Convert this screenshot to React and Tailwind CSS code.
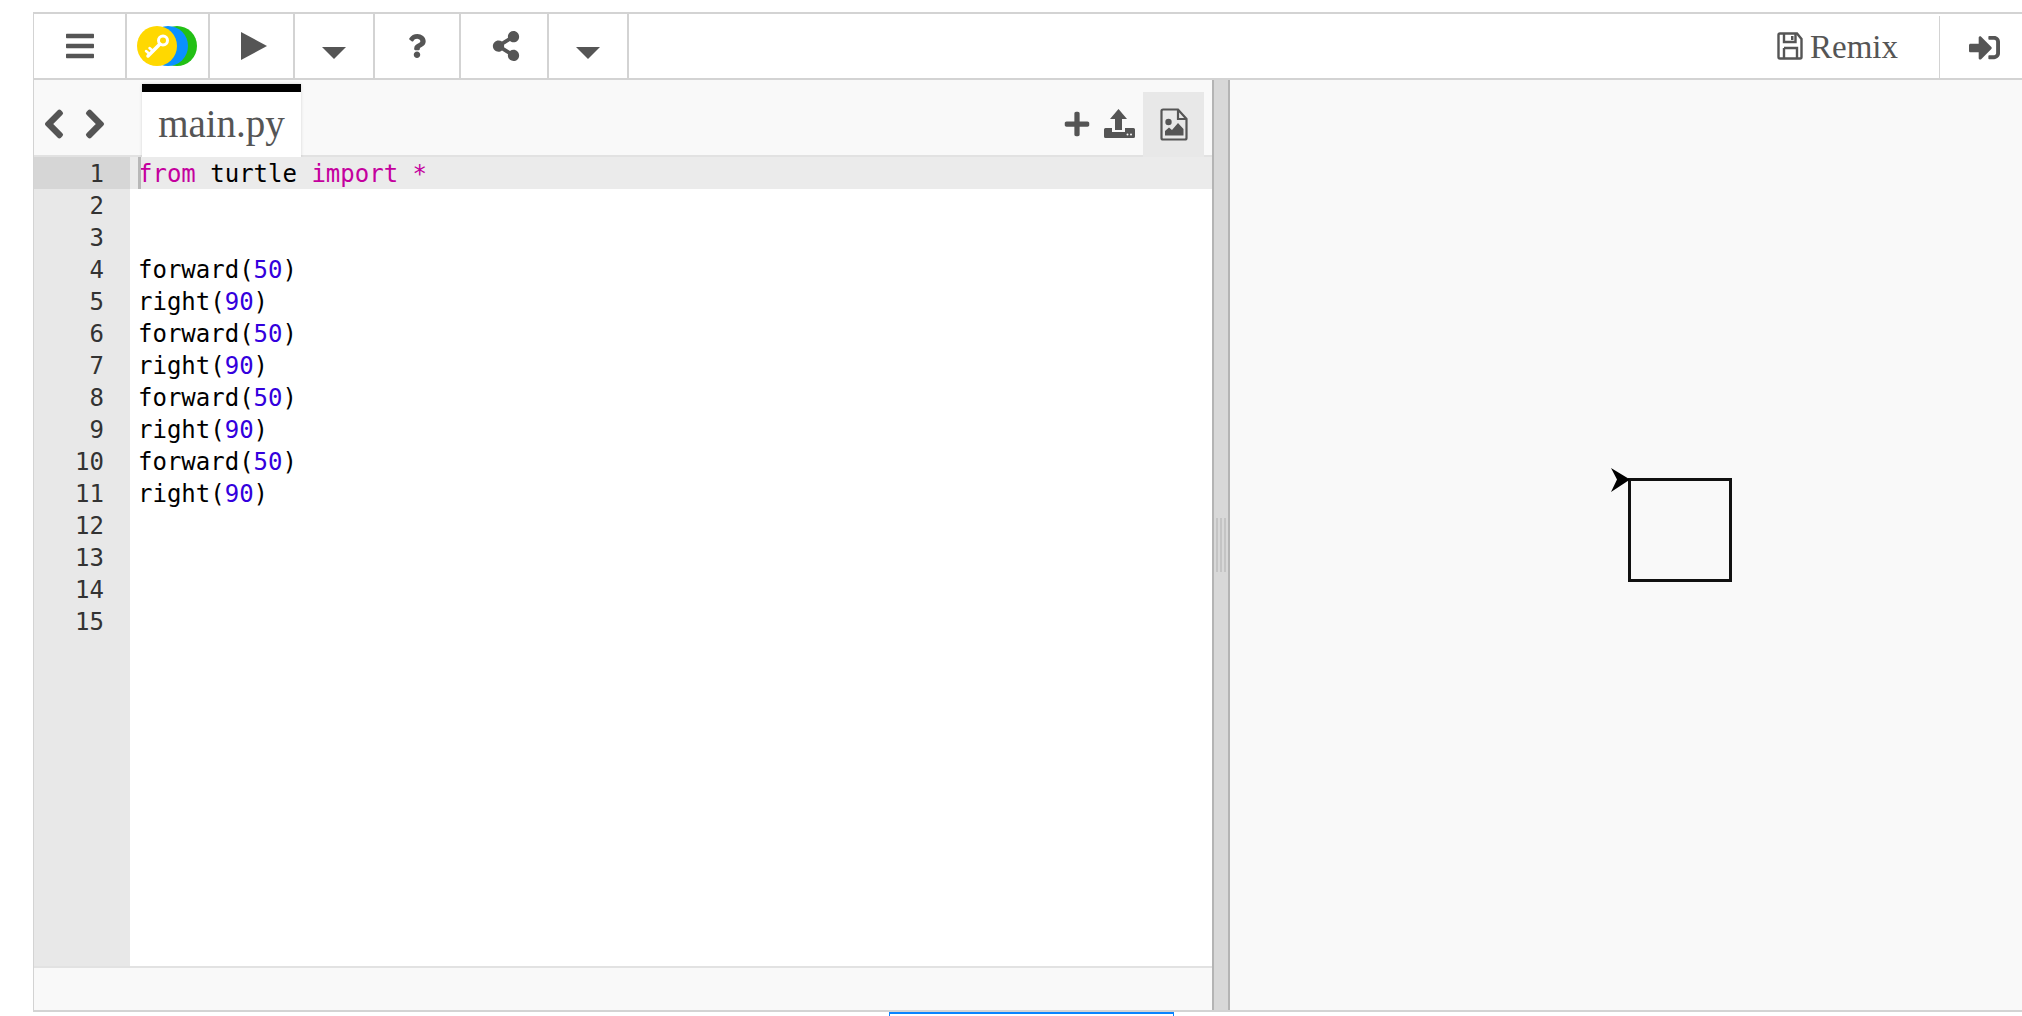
import { FaBars, FaQuestion, FaShareAlt, FaChevronLeft, FaChevronRight, FaPlus, FaSignInAlt } from 'react-icons/fa';

const codeLines = [
  [['#c4009e', 'from'], ['#000', ' turtle '], ['#c4009e', 'import'], ['#000', ' '], ['#c4009e', '*']],
  [],
  [],
  [['#000', 'forward('], ['#3300dd', '50'], ['#000', ')']],
  [['#000', 'right('], ['#3300dd', '90'], ['#000', ')']],
  [['#000', 'forward('], ['#3300dd', '50'], ['#000', ')']],
  [['#000', 'right('], ['#3300dd', '90'], ['#000', ')']],
  [['#000', 'forward('], ['#3300dd', '50'], ['#000', ')']],
  [['#000', 'right('], ['#3300dd', '90'], ['#000', ')']],
  [['#000', 'forward('], ['#3300dd', '50'], ['#000', ')']],
  [['#000', 'right('], ['#3300dd', '90'], ['#000', ')']],
  [],
  [],
  [],
  [],
];

// Three overlapping discs with the key on top
function Logo() {
  return (
    <svg width="61" height="40" viewBox="0 0 61 40">
      <circle cx="40" cy="20" r="20" fill="#22c015" />
      <circle cx="31" cy="20" r="20" fill="#0a90ff" />
      <circle cx="20" cy="20" r="20" fill="#ffd800" />
      <g stroke="#fff" fill="none" strokeLinecap="round">
        <circle cx="26" cy="14.5" r="4.5" strokeWidth="3" />
        <path d="M23 18 L11 30" strokeWidth="3.5" />
        <path d="M16 25 L12.5 22 M12.5 28 L9 25" strokeWidth="2.5" />
      </g>
    </svg>
  );
}

function PlayIcon() {
  return (
    <svg width="26" height="28" viewBox="0 0 26 28" className="ml-1">
      <path d="M0 0 L26 14 L0 28 Z" fill="currentColor" />
    </svg>
  );
}

function CaretIcon() {
  return (
    <svg width="24" height="12" viewBox="0 0 24 12" className="mt-[14px]">
      <path d="M0 0 H24 L12 12 Z" fill="currentColor" />
    </svg>
  );
}

function SaveIcon() {
  return (
    <svg width="26" height="28" viewBox="0 0 26 28" fill="none" stroke="currentColor" strokeWidth="2.4">
      <path d="M3 1.5 H20 L24.5 7 V25 Q24.5 26.5 23 26.5 H3 Q1.5 26.5 1.5 25 V3 Q1.5 1.5 3 1.5 Z" />
      <path d="M7 16 H20 V26 M7 16 V26" />
      <path d="M7 2 V10 H18.5 V2" />
      <path d="M14 4 H16.5 V8 H14 Z" fill="currentColor" strokeWidth="0" />
    </svg>
  );
}

function UploadIcon() {
  return (
    <svg width="31" height="29" viewBox="0 0 31 29">
      <path d="M14.5 0 L23 10 H18 V21 H11 V10 H6 Z" fill="currentColor" />
      <path d="M1.5 19 H8 V23 H21 V19 H29.5 Q31 19 31 20.5 V27.5 Q31 29 29.5 29 H1.5 Q0 29 0 27.5 V20.5 Q0 19 1.5 19 Z" fill="currentColor" />
      <circle cx="23.5" cy="25.5" r="1" fill="#f9f9f9" />
      <circle cx="27" cy="25.5" r="1" fill="#f9f9f9" />
    </svg>
  );
}

function ImageFileIcon() {
  return (
    <svg width="28" height="33" viewBox="0 0 28 33">
      <path d="M2.5 1.5 H18 L26.5 11 V30 Q26.5 31.5 25 31.5 H3 Q1.5 31.5 1.5 30 V3 Q1.5 1.5 3 1.5 Z M18 1.5 V11 H26.5" fill="none" stroke="currentColor" strokeWidth="2.2" />
      <circle cx="8.5" cy="14" r="3.2" fill="currentColor" />
      <path d="M5 27.5 V23 L9 19.5 L12 22 L18 15 L23.5 21 V27.5 Z" fill="currentColor" />
    </svg>
  );
}

function ToolButton({ width, children }) {
  return (
    <div className={`${width} h-full shrink-0 flex items-center justify-center border-r-2 border-[#d3d3d3] text-[#555555]`}>
      {children}
    </div>
  );
}

function Turtle() {
  return (
    <svg width="150" height="130" viewBox="0 0 150 130" className="ml-[370px] mt-[380px] block">
      <rect x="29.5" y="19.5" width="101" height="101" fill="none" stroke="#111" strokeWidth="3" />
      <path d="M11 8 L30 19.5 L11 32 L17 19.5 Z" fill="#000" />
    </svg>
  );
}

export default function App() {
  return (
    <div className="h-[1016px] overflow-hidden bg-white pt-3 font-['Liberation_Serif',serif]">
      <div className="ml-[33px] h-[1000px] flex flex-col border-l border-t-2 border-b-2 border-[#d3d3d3]">
        <div className="h-[66px] shrink-0 flex items-stretch border-b-2 border-[#d3d3d3]">
          <ToolButton width="w-[93px]"><FaBars size={32} /></ToolButton>
          <ToolButton width="w-[83px]"><Logo /></ToolButton>
          <ToolButton width="w-[85px]"><PlayIcon /></ToolButton>
          <ToolButton width="w-[80px]"><CaretIcon /></ToolButton>
          <ToolButton width="w-[86px]"><FaQuestion size={24} /></ToolButton>
          <ToolButton width="w-[88px]"><FaShareAlt size={30} className="ml-[3px]" /></ToolButton>
          <ToolButton width="w-[80px]"><CaretIcon /></ToolButton>
          <div className="flex-1 flex items-center justify-end text-[#555555]">
            <SaveIcon />
            <span className="ml-[7px] mr-[41px] pt-[3px] text-[33px] leading-none">Remix</span>
            <div className="w-px h-[62px] bg-[#d3d3d3] self-end" />
            <div className="w-[82px] flex justify-center pl-[7px] pt-[2px]"><FaSignInAlt size={31} /></div>
          </div>
        </div>

        <div className="flex-1 flex min-h-0">
          <div className="w-[1178px] shrink-0 flex flex-col">
            <div className="h-[77px] shrink-0 flex items-end bg-[#f9f9f9] border-b-2 border-[#e2e2e2] pr-2 text-[#555555]">
              <div className="w-[108px] h-full flex items-center justify-start pl-1 gap-[9px] pt-3">
                <FaChevronLeft size={32} stroke="currentColor" strokeWidth={24} />
                <FaChevronRight size={32} stroke="currentColor" strokeWidth={24} />
              </div>
              <div className="w-[159px] h-[73px] -mb-0.5 pb-[2px] border-t-8 border-black bg-white shadow-[0_0_3px_rgba(0,0,0,0.15)] flex items-center justify-center text-[39px] leading-none">
                main.py
              </div>
              <div className="flex-1 h-full flex items-center justify-end gap-[13px] pt-3 pr-[69px]">
                <FaPlus size={28} />
                <UploadIcon />
              </div>
              <div className="w-[61px] h-[65px] -mb-0.5 -ml-[61px] bg-[#e8e8e8] flex items-center justify-center">
                <ImageFileIcon />
              </div>
            </div>

            <div className="flex-1 flex min-h-0 font-['DejaVu_Sans_Mono',monospace] text-[24px] leading-[30px]">
              <div className="w-[96px] shrink-0 bg-[#e8e8e8] text-[#333333]">
                {codeLines.map((line, i) => (
                  <div key={i} className={`h-8 pt-[2px] text-right pr-[26px] ${i === 0 ? 'bg-[#d6d6d6]' : ''}`}>{i + 1}</div>
                ))}
              </div>
              <div className="flex-1 bg-white">
                {codeLines.map((line, i) => (
                  <div key={i} className={`relative h-8 pt-[2px] pl-2 whitespace-pre ${i === 0 ? 'bg-[#ebebeb]' : ''}`}>
                    {line.map(([color, text], j) => (
                      <span key={j} style={{ color }}>{text}</span>
                    ))}
                    {i === 0 && <div className="absolute left-2 top-0 w-[3px] h-8 bg-[#b8b8b8]" />}
                  </div>
                ))}
              </div>
            </div>

            <div className="h-[44px] shrink-0 bg-[#f9f9f9] border-t-2 border-[#e2e2e2]" />
          </div>

          <div className="w-[18px] shrink-0 bg-[#d8d8d8] border-x-2 border-[#b4b4b4] flex items-center justify-center">
            <div className="w-[10px] h-[54px] flex justify-between bg-[#c4c4c4] px-[2px]">
              <div className="w-[2px] bg-[#d8d8d8]" />
              <div className="w-[2px] bg-[#d8d8d8]" />
            </div>
          </div>

          <div className="flex-1 bg-[#f9f9f9]">
            <Turtle />
          </div>
        </div>
      </div>
      <div className="ml-[889px] w-[285px] h-[4px] border-t-2 border-x border-[#0a84ff]" />
    </div>
  );
}
